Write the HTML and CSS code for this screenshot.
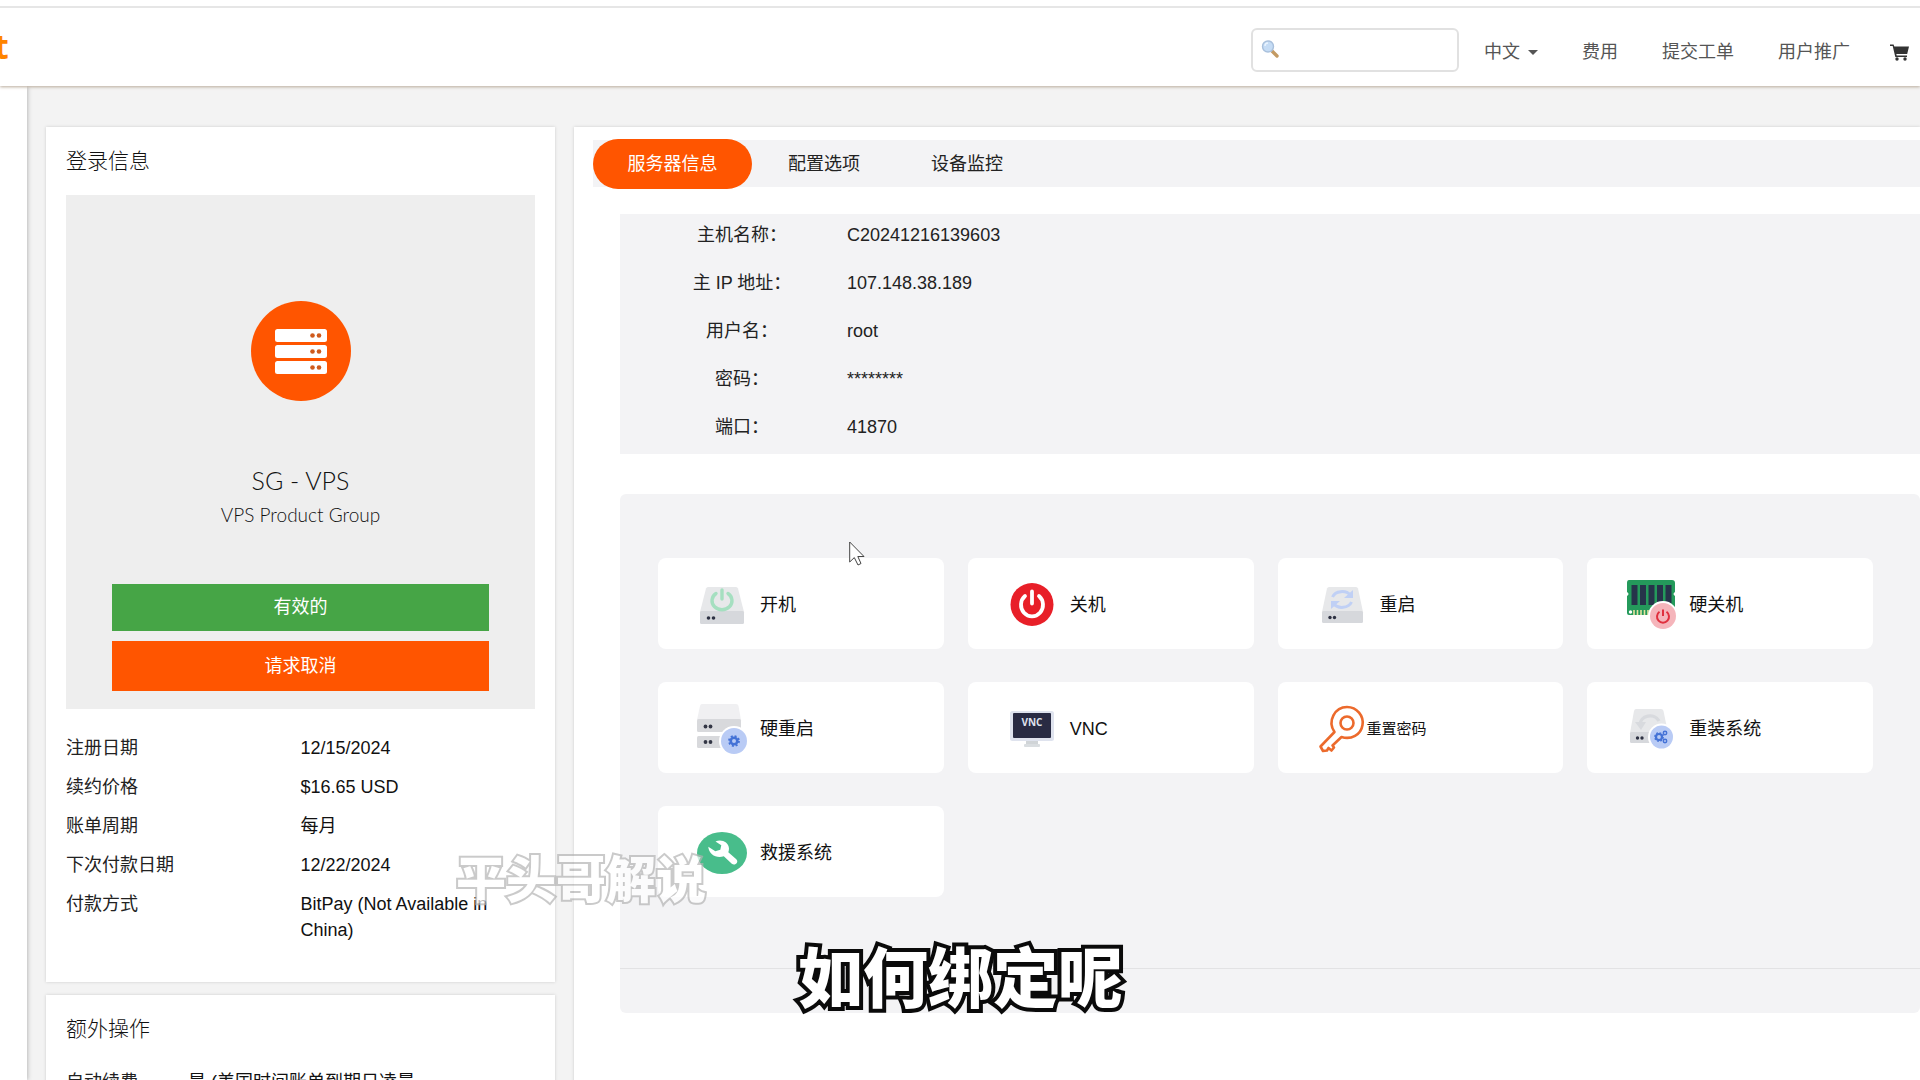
FILE: index.html
```html
<!DOCTYPE html>
<html lang="zh-CN">
<head>
<meta charset="utf-8">
<title>SG - VPS</title>
<link rel="stylesheet" href="styles.css">
</head>
<body>
<header class="topbar">
  <a class="brand" href="#">t</a>
  <div class="search">
    <svg class="search-icon" viewBox="0 0 18 18" aria-hidden="true">
      <path d="M10.500 10.500 16 16" stroke="#c39a63" stroke-width="3.400" stroke-linecap="round"/>
      <circle cx="7" cy="6.500" r="5.500" fill="#c5dcf5" stroke="#a9c0dc" stroke-width="1.400"/>
      <path d="M4 6a3 3 0 0 1 3-3" stroke="#eaf4ff" stroke-width="1.400" fill="none"/>
    </svg>
    <input class="search-input" type="text" aria-label="搜索">
  </div>
  <nav class="nav">
    <a class="nav-link lang" href="#">中文 <span class="caret"></span></a>
    <a class="nav-link" href="#">费用</a>
    <a class="nav-link" href="#">提交工单</a>
    <a class="nav-link" href="#">用户推广</a>
    <a class="nav-link cart" href="#" aria-label="购物车">
      <svg class="cart-icon" viewBox="0 0 19 17"><path d="M0 .5h3.600l.7 2H19L17.200 10H6.300l.4 1.600H17V13H5.300L2.700 2H0z" fill="#333"/><circle cx="7" cy="15" r="1.700" fill="#333"/><circle cx="15" cy="15" r="1.700" fill="#333"/></svg>
    </a>
  </nav>
</header>

<div class="shell">
  <aside class="rail"></aside>
  <main class="content">
    <div class="side">
      <section class="card">
        <h2 class="card-title">登录信息</h2>
        <div class="product">
          <svg class="product-icon" viewBox="0 0 100 100" aria-hidden="true">
            <circle cx="50" cy="50" r="50" fill="#ff5500"/>
            <g fill="#fff"><rect x="24" y="28" width="52" height="13" rx="2.500"/><rect x="24" y="44" width="52" height="13" rx="2.500"/><rect x="24" y="60" width="52" height="13" rx="2.500"/></g>
            <g fill="#cf5a1c"><circle cx="61.500" cy="34.500" r="2.300"/><circle cx="68" cy="34.500" r="2.300"/><circle cx="61.500" cy="50.500" r="2.300"/><circle cx="68" cy="50.500" r="2.300"/><circle cx="61.500" cy="66.500" r="2.300"/><circle cx="68" cy="66.500" r="2.300"/></g>
          </svg>
          <h3 class="product-name">SG - VPS</h3>
          <p class="product-group">VPS Product Group</p>
          <div class="status">有效的</div>
          <button class="cancel" type="button">请求取消</button>
        </div>
        <dl class="facts">
          <dt>注册日期</dt><dd>12/15/2024</dd>
          <dt>续约价格</dt><dd>$16.65 USD</dd>
          <dt>账单周期</dt><dd>每月</dd>
          <dt>下次付款日期</dt><dd>12/22/2024</dd>
          <dt>付款方式</dt><dd>BitPay (Not Available in China)</dd>
        </dl>
      </section>
      <section class="card extra">
        <h2 class="card-title">额外操作</h2>
        <dl class="facts renew">
          <dt>自动续费</dt><dd>是 (美国时间账单到期日凌晨</dd>
        </dl>
      </section>
    </div>

    <section class="panel">
      <nav class="tabs">
        <button class="tab active" type="button">服务器信息</button>
        <button class="tab" type="button">配置选项</button>
        <button class="tab" type="button">设备监控</button>
      </nav>
      <dl class="info">
        <dt>主机名称：</dt><dd>C20241216139603</dd>
        <dt>主 IP 地址：</dt><dd>107.148.38.189</dd>
        <dt>用户名：</dt><dd>root</dd>
        <dt>密码：</dt><dd>********</dd>
        <dt>端口：</dt><dd>41870</dd>
      </dl>
      <div class="controls">
        <div class="actions">
          <button class="action" type="button">
            <svg class="icon" viewBox="0 0 50 50" aria-hidden="true"><path d="M11 7h28q1.500 0 2 1.500L47 32H3L9 8.500Q9.500 7 11 7z" fill="#e7e8ea"/><rect x="3" y="31" width="44" height="13" rx="1.500" fill="#d6d8dc"/><path d="M19 13.500a10 9 0 1 0 12 0M25 10v9" fill="none" stroke="#a5dfc0" stroke-width="3.400" stroke-linecap="round"/><circle cx="11.500" cy="38" r="1.800" fill="#2d3142"/><circle cx="16.500" cy="38" r="1.800" fill="#2d3142"/></svg>
            <span>开机</span>
          </button>
          <button class="action" type="button">
            <svg class="icon" viewBox="0 0 50 50" aria-hidden="true"><circle cx="25" cy="24.500" r="21.500" fill="#e81f28"/><path d="M18 16a11 11.500 0 1 0 14 0M25 11.500v12" fill="none" stroke="#fff" stroke-width="3.800" stroke-linecap="round"/></svg>
            <span>关机</span>
          </button>
          <button class="action" type="button">
            <svg class="icon" viewBox="0 0 50 50" aria-hidden="true"><path d="M12 7h27q1.500 0 2 1.500L46 32H5l5-23.500Q10.500 7 12 7z" fill="#e7e8ea"/><rect x="5" y="31" width="41" height="12" rx="1.500" fill="#d6d8dc"/><path d="M15.500 17a10 8 0 0 1 18-1.500M34.500 22a10 8 0 0 1-18 1.500" fill="none" stroke="#c0d0f5" stroke-width="3"/><path d="M36 10v8h-9zM14 29v-8h9z" fill="#c0d0f5"/><circle cx="13" cy="37.500" r="1.700" fill="#2d3142"/><circle cx="17.500" cy="37.500" r="1.700" fill="#2d3142"/></svg>
            <span>重启</span>
          </button>
          <button class="action" type="button">
            <svg class="icon" viewBox="0 0 50 50" aria-hidden="true"><path d="M3 0h43q3 0 3 3v9q-3 2 0 4v17q0 2-2 2H3q-2 0-2-2V16q3-2 0-4V3q0-3 2-3z" fill="#249a5b"/><g fill="#26344a"><rect x="5.500" y="5" width="6" height="20"/><rect x="14" y="5" width="6" height="20"/><rect x="22.500" y="5" width="6" height="20"/><rect x="31" y="5" width="6" height="20"/><rect x="39.500" y="5" width="6" height="20"/></g><path d="M8 30v5M11.500 30v5M15 30v5M18.500 30v5M22 30v5" stroke="#e8e2a0" stroke-width="1.600"/><circle cx="4.500" cy="32" r="1.700" fill="#fff"/><circle cx="37" cy="36" r="15" fill="#fff"/><circle cx="37" cy="36" r="13" fill="#f5b5bb"/><path d="M33.500 31.800a6 6 0 1 0 7 0M37 29.500V36" fill="none" stroke="#e0303e" stroke-width="2"/></svg>
            <span>硬关机</span>
          </button>
          <button class="action" type="button">
            <svg class="icon" viewBox="0 0 50 50" aria-hidden="true"><path d="M5 0h34q2 0 2.500 2L44 16H0L3 2q.5-2 2-2z" fill="#f0f0f2"/><rect y="15" width="44" height="13" rx="1.500" fill="#d8d9dc"/><rect y="32" width="44" height="12" rx="1.500" fill="#d8d9dc"/><g fill="#333645"><circle cx="8.500" cy="22.500" r="1.900"/><circle cx="13.500" cy="22.500" r="1.900"/><circle cx="8.500" cy="38" r="1.900"/><circle cx="13.500" cy="38" r="1.900"/></g><circle cx="37" cy="37" r="15" fill="#fff"/><circle cx="37" cy="37" r="13" fill="#b9cbf5"/><circle cx="37" cy="37" r="3.300" fill="none" stroke="#4472d6" stroke-width="2.600"/><circle cx="37" cy="37" r="5" fill="none" stroke="#4472d6" stroke-width="1.800" stroke-dasharray="2 1.930"/></svg>
            <span>硬重启</span>
          </button>
          <button class="action" type="button">
            <svg class="icon" viewBox="0 0 50 50" aria-hidden="true"><rect x="19" y="36" width="12" height="5" fill="#d0d4d7"/><rect x="17" y="40" width="16" height="3" rx="1" fill="#d9dde0"/><rect x="3" y="7" width="44" height="30" rx="2.500" fill="#dfe3ee"/><rect x="6" y="9" width="38" height="25" rx="1" fill="#292b43"/><text class="vnc-mark" x="25" y="22" text-anchor="middle">VNC</text></svg>
            <span>VNC</span>
          </button>
          <button class="action compact" type="button">
            <svg class="icon" viewBox="0 0 50 50" aria-hidden="true"><g fill="none" stroke="#ec6a2c" stroke-width="2.600" stroke-linejoin="round"><path d="M17.500 28C10 17 18 3 30 3c10 0 17 9 15.500 18C44 31 34 36 24.500 33L15.500 41.500l1.500 2-2.500 3-3-2.500-1.500 2.500-4 .5-2.500-4.500z"/><circle cx="30" cy="19" r="6.500"/></g></svg>
            <span>重置密码</span>
          </button>
          <button class="action" type="button">
            <svg class="icon" viewBox="0 0 50 50" aria-hidden="true"><path d="M10 5h25q2 0 2.500 2L42 29H4L8 7q.5-2 2-2z" fill="#e7e8ea"/><rect x="4" y="28" width="38" height="11" rx="1.500" fill="#d6d8dc"/><path d="M14 21a10 9 0 0 1 19-4" fill="none" stroke="#d8dade" stroke-width="3.400"/><path d="M9 18h11l-5 8z" fill="#d8dade"/><circle cx="11.500" cy="34" r="1.700" fill="#2d3142"/><circle cx="16" cy="34" r="1.700" fill="#2d3142"/><circle cx="35.500" cy="33" r="13.500" fill="#fff"/><circle cx="35.500" cy="33" r="11.500" fill="#b9cbf5"/><g fill="none" stroke="#4472d6"><circle cx="33" cy="33" r="3" stroke-width="2.200"/><circle cx="33" cy="33" r="4.200" stroke-width="1.400" stroke-dasharray="1.700 1.600"/><circle cx="39" cy="29" r="1.700" stroke-width="1.500"/><circle cx="39" cy="37" r="1.700" stroke-width="1.500"/></g></svg>
            <span>重装系统</span>
          </button>
          <button class="action" type="button">
            <svg class="icon" viewBox="0 0 50 50" aria-hidden="true"><ellipse cx="25" cy="25" rx="25" ry="21" fill="#48bd8b"/><path d="M18.500 13.500c6-2.500 13 .5 13.500 7 0 1.500-.3 2.700-.7 3.700l8 7c3 3-1.500 7-4.500 4.500l-8-7.500c-7 2.500-15-1.500-15.500-9.500l7 4.500 5-1.500 1-4.500z" fill="#fff"/></svg>
            <span>救援系统</span>
          </button>
        </div>
        <hr class="rule">
      </div>
    </section>
  </main>
</div>

<div class="watermark">平头哥解说</div>
<div class="caption">如何绑定呢</div>
<svg class="pointer" viewBox="0 0 16 25" aria-hidden="true"><path d="M.7 1v20l4.600-4.400L9 24l3-1.500L8.800 15.500H15z" fill="#fff" stroke="#444" stroke-width="1"/></svg>
</body>
</html>
```
FILE: styles.css
```css
* { box-sizing: border-box; }

html { height: 100%; }

body {
  margin: 0;
  height: 100%;
  display: flex;
  flex-direction: column;
  overflow: hidden;
  background: #f3f3f3;
  color: #111;
  font: 18px/26px "Liberation Sans", "Noto Sans CJK SC", sans-serif;
  font-weight: 400;
}

h2, h3, p, dl, dd { margin: 0; }
button { font: inherit; color: inherit; border: 0; padding: 0; }
a { color: inherit; text-decoration: none; }

/* header */
.topbar {
  position: relative;
  z-index: 1;
  flex: none;
  display: flex;
  align-items: center;
  height: 80px;
  margin-top: 6px;
  padding-right: 11px;
  background: #fff;
  border-top: 2px solid #e6e6e6;
  box-shadow: 0 -6px 0 #fff, 0 1px 3px #b8aa9a;
}
.brand {
  margin: 0 auto 2px -6px;
  color: #ff8400;
  font: bold 34px/40px "Open Sans", sans-serif;
}
.search { position: relative; width: 208px; margin-top: 6px; }
.search-icon { position: absolute; left: 10px; top: 12px; width: 18px; height: 18px; }
.search-input {
  display: block;
  width: 100%;
  height: 44px;
  padding: 0 12px 0 36px;
  border: 2px solid #e1e1e1;
  border-radius: 6px;
  background: transparent;
  font: inherit;
}
.nav { display: flex; align-items: center; gap: 44px; margin: 10px 0 0 25px; color: #555; }
.nav-link { display: flex; align-items: center; }
.caret {
  margin-left: 8px;
  border: 5px solid transparent;
  border-top-color: #555;
  border-bottom: 0;
}
.cart { margin-left: -4px; }
.cart-icon { width: 19px; height: 17px; }

/* page body */
.shell { flex: 1; display: flex; min-height: 0; }
.rail { flex: none; width: 27px; background: #fff; box-shadow: 1px 0 4px #bbb; }
.content {
  flex: 1;
  display: grid;
  grid-template-columns: minmax(0, 509fr) minmax(0, 1346fr);
  gap: 19px;
  padding: 41px 0 0 19px;
  min-width: 0;
}
.side { display: flex; flex-direction: column; gap: 13px; }
.card { padding: 20px 20px 39px; background: #fff; box-shadow: 0 0 3px #ccc; }
.card-title { font-size: 21px; line-height: 28px; font-weight: 300; color: #111; }
.product {
  display: flex;
  flex-direction: column;
  align-items: center;
  margin-top: 20px;
  padding: 106px 46px 18px;
  background: #eee;
}
.product-icon { width: 100px; height: 100px; }
.product-name { margin-top: 63px; font: 300 25px/32px Lato, sans-serif; }
.product-group { margin: 6px 0 56px; font: 300 19px/26px Lato, sans-serif; }
.status, .cancel { width: 100%; color: #fff; text-align: center; }
.status { padding: 10px 0 11px; background: #46a546; }
.cancel { height: 50px; margin-top: 10px; background: #f50; }
.facts {
  display: grid;
  grid-template-columns: 1fr 1fr;
  row-gap: 13px;
  margin-top: 26px;
}
.facts dt { color: #222; }
.renew { grid-template-columns: 122px 1fr; }
.extra { flex: 1; }

/* server panel */
.panel { padding: 12px 0 0 19px; background: #fff; box-shadow: 0 0 3px #ccc; }
.tabs { display: flex; align-items: center; height: 49px; background: linear-gradient(#f3f3f5 0 0) 0 1px / 100% 47px no-repeat; }
.tab { padding: 0 35px 0 36px; background: none; color: #222; }
.tab.active { width: 159px; height: 50px; padding: 0; border-radius: 25px; background: #f50; color: #fff; }
.info, .controls { margin-left: 27px; background: #f3f3f5; }
.info {
  display: grid;
  grid-template-columns: 227px 1fr;
  row-gap: 22px;
  margin-top: 26px;
  padding: 8px 0 14px;
  color: #222;
}
.info dt { padding-left: 17px; text-align: center; }
.controls { margin-top: 40px; padding: 64px 0 44px; border-radius: 6px; }
.actions {
  display: grid;
  grid-template-columns: repeat(4, minmax(0, 1fr));
  gap: 33px 24px;
  padding: 0 47px 0 38px;
}
.action {
  display: flex;
  align-items: center;
  gap: 13px;
  height: 91px;
  padding: 2px 0 0 39px;
  border-radius: 8px;
  background: #fff;
}
.compact { gap: 0; font-size: 15px; }
.icon { flex: none; width: 50px; height: 50px; }
.vnc-mark { fill: #dfe1ee; font: bold 10px "Open Sans", sans-serif; }
.rule { margin: 71px 0 0; border: 0; border-top: 1px solid #e2e2e4; }

/* overlays */
.watermark, .caption { position: absolute; white-space: nowrap; font-family: "Noto Sans CJK SC", sans-serif; font-weight: 900; }
.watermark {
  left: 456px;
  top: 846px;
  font-size: 50px;
  line-height: 60px;
  color: #fff;
  opacity: .7;
  -webkit-text-stroke: 4px #b4b4b4;
  paint-order: stroke fill;
}
.caption {
  left: 798px;
  top: 934px;
  font-size: 65px;
  line-height: 80px;
  color: #fff;
  -webkit-text-stroke: 8px #0a0a0a;
  paint-order: stroke fill;
}
.pointer { position: absolute; left: 849px; top: 541px; width: 16px; height: 25px; }
```
